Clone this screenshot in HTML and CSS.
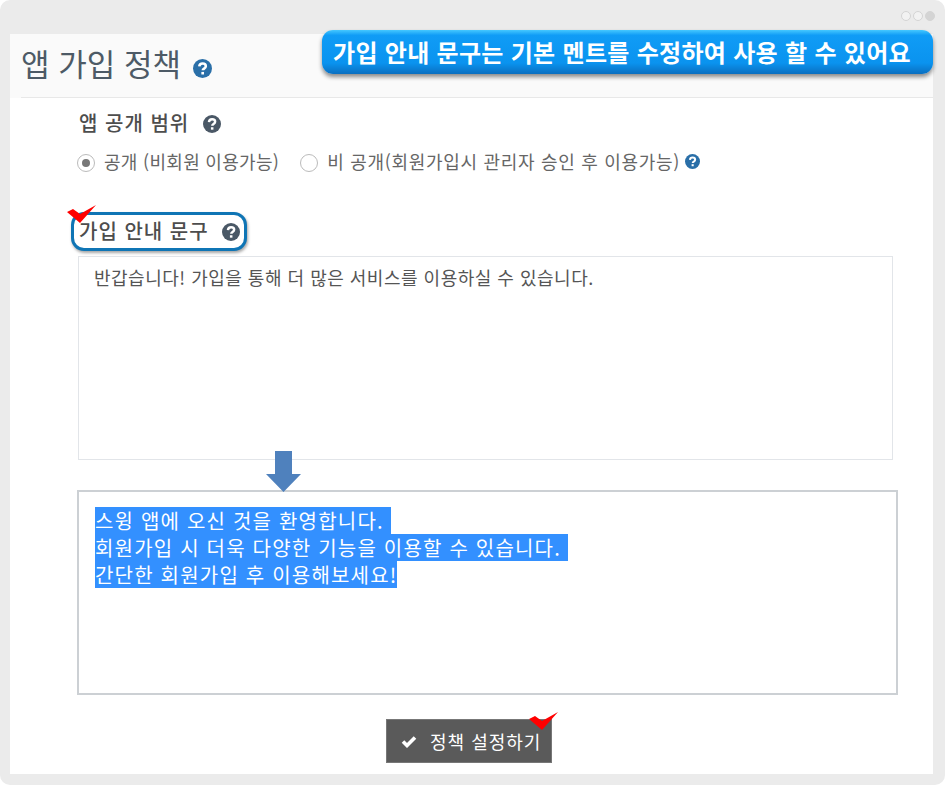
FILE: index.html
```html
<!DOCTYPE html>
<html lang="ko">
<head>
    <meta charset="UTF-8">
    <meta name="viewport" content="width=device-width, initial-scale=1.0">
    <title>앱 가입 정책</title>
    <link rel="stylesheet" href="styles.css">
</head>
<body>
    <svg class="icon-defs" width="0" height="0">
        <symbol id="help" viewBox="0 0 20 20">
            <circle cx="10" cy="10" r="10" fill="currentColor"/>
            <path d="M6.6 7.8c.2-2 1.600-3 3.500-3 2 0 3.400 1.100 3.400 2.800 0 2.500-3.200 2.400-3.200 4.300" fill="none" stroke="#fff" stroke-width="2.700"/>
            <rect x="8.800" y="13.600" width="2.800" height="2.700" fill="#fff"/>
        </symbol>
        <symbol id="check-mark" viewBox="0 0 29 18">
            <polygon points="0,7 6,4 13,9 29,0 13,18" fill="#f00"/>
        </symbol>
    </svg>

    <div class="window">
        <div class="window-dots">
            <span></span><span></span><span class="dark"></span>
        </div>

        <div class="callout">가입 안내 문구는 기본 멘트를 수정하여 사용 할 수 있어요</div>

        <div class="panel">
            <div class="panel-head">
                <h1 class="panel-title">앱 가입 정책 <svg class="help help-title"><use href="#help"/></svg></h1>
            </div>

            <div class="panel-body">
                <div class="field-label">앱 공개 범위 <svg class="help help-label"><use href="#help"/></svg></div>

                <div class="radio-row">
                    <span class="radio checked"></span>
                    <span class="radio-text">공개 (비회원 이용가능)</span>
                    <span class="radio second"></span>
                    <span class="radio-text wide">비 공개(회원가입시 관리자 승인 후 이용가능)</span>
                    <svg class="help help-radio"><use href="#help"/></svg>
                </div>

                <div class="pill-wrap">
                    <svg class="check check-pill"><use href="#check-mark"/></svg>
                    <div class="pill">가입 안내 문구 <svg class="help help-label"><use href="#help"/></svg></div>
                </div>

                <div class="message-box">반갑습니다! 가입을 통해 더 많은 서비스를 이용하실 수 있습니다.</div>

                <svg class="down-arrow" width="36" height="41" viewBox="0 0 36 41">
                    <polygon points="9,0 26,0 26,23 35,23 17.500,41 0,23 9,23" fill="#4f81bd"/>
                </svg>

                <div class="message-box edited">
                    <div><span class="selected">스윙 앱에 오신 것을 환영합니다. </span></div>
                    <div><span class="selected">회원가입 시 더욱 다양한 기능을 이용할 수 있습니다. </span></div>
                    <div><span class="selected">간단한 회원가입 후 이용해보세요!</span></div>
                </div>

                <div class="button-wrap">
                    <button class="save-button">
                        <svg class="save-check" width="16" height="13" viewBox="0 0 16 13">
                            <path d="M2 6.500l4 4 8-8" fill="none" stroke="#fff" stroke-width="3.600"/>
                        </svg>
                        정책 설정하기
                    </button>
                    <svg class="check check-button"><use href="#check-mark"/></svg>
                </div>
            </div>
        </div>
    </div>
</body>
</html>
```

FILE: styles.css
```css
body {
    margin: 0;
    background-color: #fff;
    font-family: "Noto Sans CJK KR", "Noto Sans", sans-serif;
    color: #555;
}

.icon-defs {
    display: block;
}

/* Outer grey frame */
.window {
    position: relative;
    width: 945px;
    height: 785px;
    box-sizing: border-box;
    padding: 10px 12px 11px 10px;
    background-color: #ebebeb;
    border-radius: 10px;
}

.window-dots {
    display: flex;
    justify-content: flex-end;
    gap: 2px;
    height: 24px;
    margin-right: -2px;
}

.window-dots span {
    width: 8px;
    height: 8px;
    margin-top: 1px;
    border: 1px solid #d4d4d4;
    border-radius: 50%;
    background-color: #f2f2f2;
}

.window-dots .dark {
    background-color: #d4d4d4;
}

/* Blue note over the header */
.callout {
    position: absolute;
    top: 30px;
    left: 322px;
    width: 611px;
    height: 44px;
    box-sizing: border-box;
    padding-left: 11px;
    border-radius: 11px;
    background: linear-gradient(#45c8ff 0, #109cf6 12%, #0a93ef 75%, #0a6fc0 100%);
    box-shadow: 0 3px 4px rgba(0, 0, 0, 0.45);
    color: #fff;
    font-size: 24px;
    font-weight: 700;
    letter-spacing: 0.3px;
    line-height: 43px;
    white-space: nowrap;
}

.panel {
    height: 740px;
    background-color: #fff;
}

.panel-head {
    height: 64px;
    box-sizing: border-box;
    padding-left: 11px;
    background-color: #fafafa;
}

.panel-title {
    height: 64px;
    box-sizing: border-box;
    margin: 0;
    border-bottom: 1px solid #e8e8e8;
    color: #4d5a66;
    font-size: 31px;
    font-weight: 400;
    line-height: 58px;
}

.help {
    display: inline-block;
    vertical-align: middle;
}

.help-title {
    width: 19px;
    height: 19px;
    margin: 2px 0 0 3px;
    color: #2a6fa8;
}

.help-label {
    width: 18px;
    height: 18px;
    margin: 0 0 4px 7px;
    color: #4a5866;
}

.help-radio {
    width: 15px;
    height: 15px;
    margin-left: 5px;
    color: #2a6fa8;
}

.panel-body {
    padding: 11px 0 0 67px;
}

.field-label {
    margin-left: 2px;
    color: #4d4d4d;
    font-size: 20px;
    font-weight: 500;
    letter-spacing: 1px;
    line-height: 28px;
}

.radio-row {
    display: flex;
    align-items: center;
    height: 28px;
    margin-top: 10px;
    color: #666;
    font-size: 18px;
    letter-spacing: 0.3px;
}

.radio-text.wide {
    letter-spacing: 0.7px;
}

.radio {
    position: relative;
    width: 18px;
    height: 18px;
    box-sizing: border-box;
    margin: 3px 9px 0 0;
    border: 1px solid #bbb;
    border-radius: 50%;
    background-color: #fff;
}

.radio.second {
    margin-left: 21px;
}

.radio.checked::after {
    content: "";
    position: absolute;
    top: 4px;
    left: 4px;
    width: 8px;
    height: 8px;
    border-radius: 50%;
    background-color: #777;
}

.pill-wrap {
    position: relative;
    width: 176px;
    margin: 37px 0 5px -6px;
}

.pill {
    height: 39px;
    box-sizing: border-box;
    padding-left: 5px;
    border: 3px solid #0f75b5;
    border-radius: 13px;
    background-color: #fff;
    box-shadow: 1px 2px 3px rgba(0, 0, 0, 0.35);
    color: #4d4d4d;
    font-size: 20px;
    font-weight: 500;
    letter-spacing: 1px;
    line-height: 32px;
    white-space: nowrap;
}

.check {
    position: absolute;
    z-index: 1;
    width: 29px;
    height: 18px;
}

.check-pill {
    top: -7px;
    left: -4px;
}

.message-box {
    width: 815px;
    height: 204px;
    box-sizing: border-box;
    margin-left: 1px;
    padding: 6px 15px;
    border: 1px solid #e2e5e9;
    color: #555;
    font-size: 18px;
    letter-spacing: 0.5px;
    line-height: 28px;
}

.down-arrow {
    display: block;
    position: relative;
    z-index: 1;
    margin: -9px 0 -2px 189px;
}

.message-box.edited {
    width: 821px;
    height: 205px;
    margin-left: 0;
    padding: 15px 16px;
    border: 2px solid #ccd0d4;
    color: #fff;
    font-size: 20px;
    letter-spacing: 1.2px;
    line-height: 27px;
}

.selected {
    display: inline-block;
    background-color: #3390ff;
    white-space: pre;
}

.button-wrap {
    position: relative;
    width: 166px;
    margin: 24px 0 0 309px;
}

.save-button {
    display: flex;
    align-items: center;
    width: 166px;
    height: 44px;
    padding: 0 0 0 14px;
    border: 1px solid #777;
    background-color: #5a5a5a;
    color: #fff;
    font-family: inherit;
    font-size: 18px;
    letter-spacing: 1px;
    cursor: pointer;
}

.save-check {
    margin-right: 13px;
}

.check-button {
    top: -7px;
    left: 143px;
}
```
